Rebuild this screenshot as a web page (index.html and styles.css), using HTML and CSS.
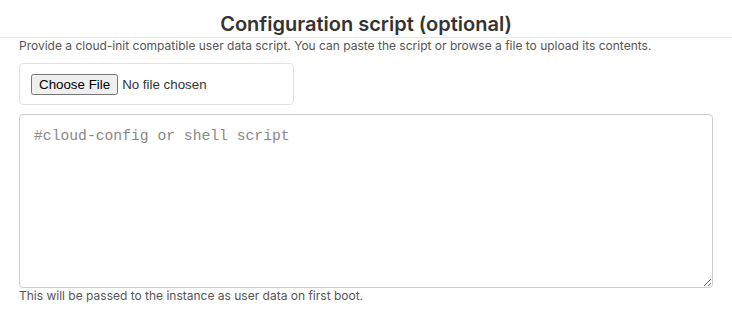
FILE: index.html
```html
<!DOCTYPE html>
<html>
<head>
    <title>Configuration script</title>
    <meta name="viewport" content="width=device-width, initial-scale=1">
    <link rel="stylesheet" href="styles.css">
</head>
<body>
    <h2 class="title">Configuration script (optional)</h2>
    <div class="section">
        <p class="hint">Provide a cloud-init compatible user data script. You can paste the script or browse a file to upload its contents.</p>

        <div class="file-box">
            <input type="file" id="scriptFile">
        </div>

        <textarea id="userData" class="script-input" placeholder="#cloud-config or shell script"></textarea>
        <p class="hint">This will be passed to the instance as user data on first boot.</p>
    </div>
</body>
</html>
```

FILE: styles.css
```css
body {
    margin: 0;
    font-family: Inter, Roboto, Arial, sans-serif;
    background: #fff;
    color: #333;
}
.title {
    margin: 0;
    padding-top: 11px;
    height: 26px;
    font-size: 20px;
    line-height: 26px;
    font-weight: 600;
    text-align: center;
    color: #333;
    border-bottom: 1px solid #e6e6e6;
}
.section {
    padding: 0 20px 0 19px;
}
.hint {
    margin: 0;
    font-size: 12px;
    line-height: 15px;
    color: #555;
}
.file-box {
    display: flex;
    align-items: center;
    width: 251px;
    height: 40px;
    margin: 10px 0 9px;
    padding: 0 11px;
    border: 1px solid #e2e2e2;
    border-radius: 4px;
}
.file-box input {
    font-family: Arial, "Liberation Sans", sans-serif;
    font-size: 13.33px;
}
.script-input {
    display: block;
    box-sizing: border-box;
    width: 694px;
    height: 174px;
    padding: 11px 14px;
    border: 1px solid #ccc;
    border-radius: 4px;
    font-family: "Liberation Mono", monospace;
    font-size: 14.7px;
    line-height: 20px;
    color: #333;
}
.script-input::placeholder {
    color: #888;
}
```
